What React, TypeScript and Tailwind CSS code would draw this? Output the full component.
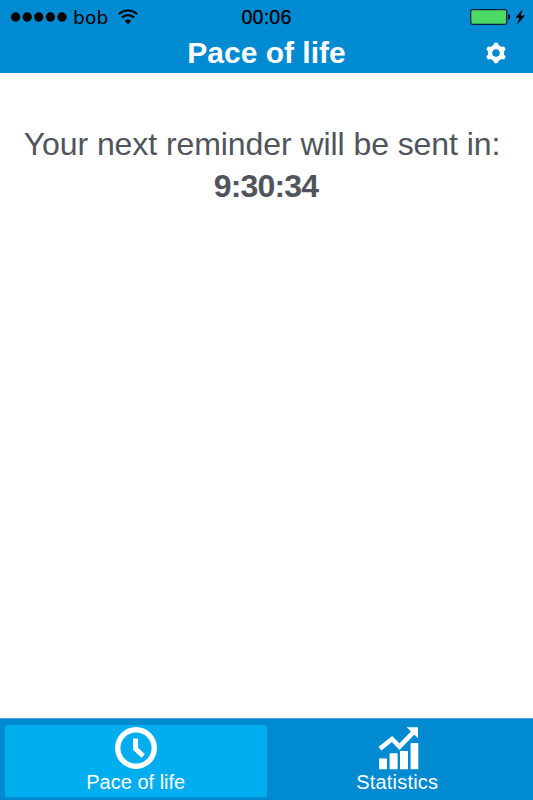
import type { ReactNode } from "react";

const SignalDots = () => (
  <svg width="57" height="10" viewBox="0 0 57 10" fill="currentColor">
    {[4.6, 16.2, 27.8, 39.4, 51].map((cx) => (
      <circle key={cx} cx={cx} cy="5" r="4.65" />
    ))}
  </svg>
);

const WifiIcon = () => (
  <svg width="20" height="16" viewBox="0 0 20 16" fill="none" stroke="currentColor">
    <path d="M0.9 5.2a13 13 0 0 1 18.2 0" strokeWidth="2.2" />
    <path d="M3.9 8.6a8.8 8.8 0 0 1 12.2 0" strokeWidth="2.2" />
    <path d="M6.7 11.8a4.8 4.8 0 0 1 6.6 0L10 15.2z" fill="currentColor" stroke="none" />
  </svg>
);

const BatteryIcon = () => (
  <svg width="56" height="18" viewBox="0 0 56 18">
    <rect x="0.7" y="1.7" width="36" height="14.6" rx="1.8" fill="#4cd964" stroke="#03203a" strokeWidth="1.2" />
    <path d="M38.2 6.2c1.2 0 1.8 1 1.8 2.8s-.6 2.8-1.8 2.8z" fill="#000" />
    <path d="M52.6 1.2 45.4 9.8h3.9l-2.4 7 8.1-9.2h-4.2z" fill="#000" />
  </svg>
);

const GearIcon = () => (
  <svg width="20" height="22" viewBox="0 0 20 22">
    <circle cx="10" cy="11" r="6" fill="none" stroke="#fff" strokeWidth="4.4" />
    {[0, 60, 120, 180, 240, 300].map((angle) => (
      <path key={angle} d="M6.8 5.4 8.1 1.2Q8.3.7 8.8.7h2.4q.5 0 .7.5l1.3 4.2z" fill="#fff" transform={`rotate(${angle} 10 11)`} />
    ))}
  </svg>
);

const ClockIcon = () => (
  <svg width="42" height="42" viewBox="0 0 42 42" fill="none" stroke="#fff">
    <circle cx="21" cy="21" r="18.3" strokeWidth="5.4" />
    <path d="M20.6 11.4v10.4l7.6 7.2" strokeWidth="5" />
  </svg>
);

const ChartIcon = () => (
  <svg width="42" height="44" viewBox="0 0 42 44" fill="#fff">
    <path d="M1 31.6h8v10.7H1zM11.6 26.3h8v16h-8zM22 24h8v18.3h-8zM32.6 16h7.7v26.3h-7.7z" />
    <path d="M2 21.6 14 12l7.5 7.6L35.5 5.2" fill="none" stroke="#fff" strokeWidth="4.6" />
    <path d="M28.6 0.2H40v11z" />
  </svg>
);

const Tab = ({ label, icon, active }: { label: ReactNode; icon: ReactNode; active?: boolean }) => (
  <button
    className={
      active
        ? "flex flex-1 flex-col items-center rounded-[1px] bg-[#00adef] text-white"
        : "flex flex-1 flex-col items-center text-white"
    }
  >
    {icon}
    {label}
  </button>
);

export default function App() {
  return (
    <div className="flex h-[800px] w-[533px] flex-col overflow-hidden bg-white font-['Liberation_Sans',sans-serif]">
      <header className="h-[73px] shrink-0 bg-[#008ad2]">
        <div className="grid h-[34px] grid-cols-3 items-center text-black">
          <div className="flex items-center pl-[11px]">
            <SignalDots />
            <span className="ml-[5px] mr-[10px] pt-[2px] font-['DejaVu_Sans',sans-serif] text-[18.5px] leading-[32px] tracking-[0.2px]">
              bob
            </span>
            <WifiIcon />
          </div>
          <span className="text-center text-[19.6px] leading-[34px] tracking-[0.2px] [-webkit-text-stroke:0.3px_black]">
            00:06
          </span>
          <div className="flex justify-end pr-[7px]">
            <BatteryIcon />
          </div>
        </div>
        <div className="grid h-[39px] grid-cols-[80px_1fr_80px]">
          <h1 className="col-start-2 text-center text-[30px] leading-[38px] font-bold text-white">Pace of life</h1>
          <button className="flex justify-end pt-2 pr-[27px]" aria-label="Settings">
            <GearIcon />
          </button>
        </div>
      </header>

      <main className="flex-1 pt-[51px] pr-[9px] text-center text-[32px] leading-[41px] text-[#50545d]">
        <p className="whitespace-nowrap tracking-[-0.07px]">Your next reminder will be sent in:</p>
        <p className="pt-px pl-[8px] font-bold tracking-[-0.8px]">9:30:34</p>
      </main>

      <nav className="flex h-[82px] shrink-0 border-t border-[#4e9fd8] bg-[#008ad2] px-[5px] pt-[6px] pb-[3px]">
        <Tab
          active
          icon={<div className="mt-[2px] h-[43px]"><ClockIcon /></div>}
          label={<span className="text-[20px] leading-[24px]">Pace of life</span>}
        />
        <Tab
          icon={<div className="mt-[2px] h-[43px] pl-[3px]"><ChartIcon /></div>}
          label={<span className="text-[20px] leading-[24px] tracking-[0.2px]">Statistics</span>}
        />
      </nav>
    </div>
  );
}
